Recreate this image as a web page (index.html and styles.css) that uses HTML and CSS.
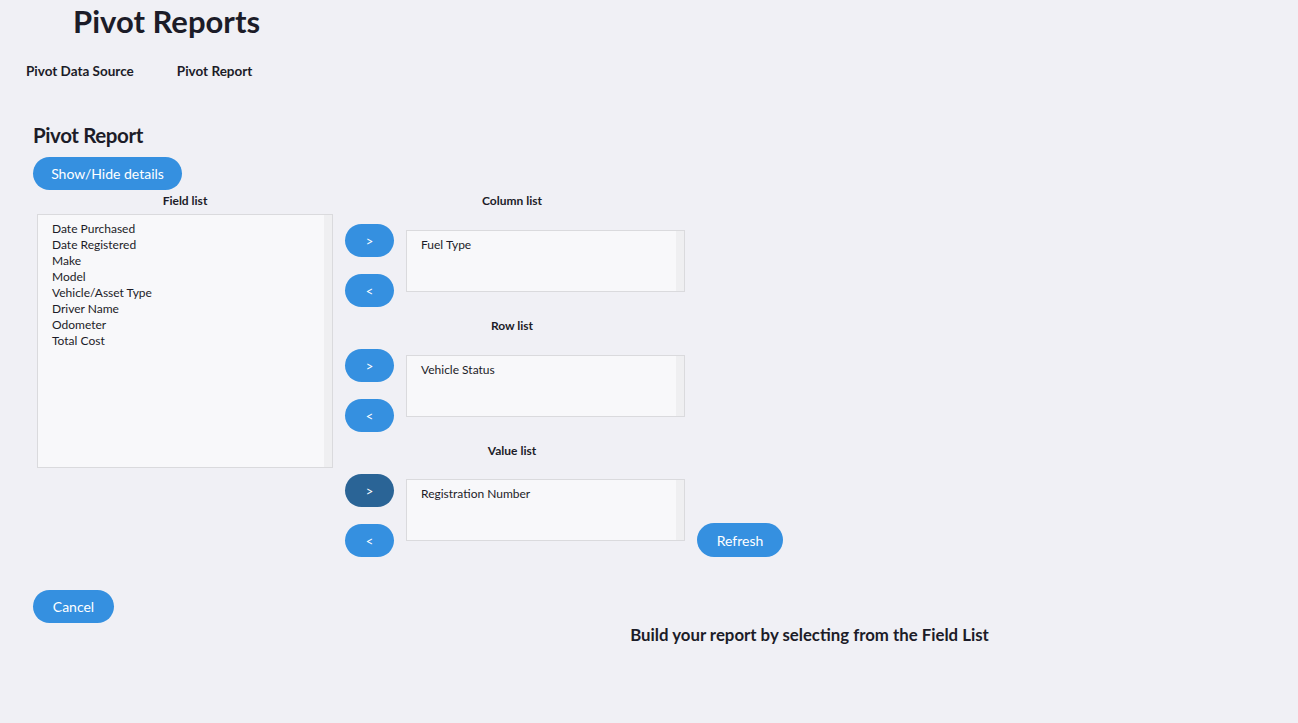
FILE: index.html
```html
<!DOCTYPE html>
<html>
<head>
    <title>Pivot Reports</title>
    <link rel="stylesheet" href="styles.css">
</head>
<body>
    <h1 class="page-title">Pivot Reports</h1>
    <nav class="tabs">
        <a class="tab">Pivot Data Source</a>
        <a class="tab">Pivot Report</a>
    </nav>

    <section class="report">
        <h2 class="report-title">Pivot Report</h2>
        <button class="btn btn-details">Show/Hide details</button>

        <div class="builder">
            <div class="field-col">
                <div class="list-label">Field list</div>
                <div class="listbox field-box">
                    <ul class="items">
                        <li>Date Purchased</li>
                        <li>Date Registered</li>
                        <li>Make</li>
                        <li>Model</li>
                        <li>Vehicle/Asset Type</li>
                        <li>Driver Name</li>
                        <li>Odometer</li>
                        <li>Total Cost</li>
                    </ul>
                    <div class="track"></div>
                </div>
            </div>

            <div class="targets">
                <div class="group">
                    <div class="list-label group-label">Column list</div>
                    <div class="group-row">
                        <div class="arrows">
                            <button class="btn btn-arrow">&gt;</button>
                            <button class="btn btn-arrow">&lt;</button>
                        </div>
                        <div class="listbox small-box">
                            <ul class="items"><li>Fuel Type</li></ul>
                            <div class="track"></div>
                        </div>
                    </div>
                </div>

                <div class="group">
                    <div class="list-label group-label">Row list</div>
                    <div class="group-row">
                        <div class="arrows">
                            <button class="btn btn-arrow">&gt;</button>
                            <button class="btn btn-arrow">&lt;</button>
                        </div>
                        <div class="listbox small-box">
                            <ul class="items"><li>Vehicle Status</li></ul>
                            <div class="track"></div>
                        </div>
                    </div>
                </div>

                <div class="group">
                    <div class="list-label group-label">Value list</div>
                    <div class="group-row">
                        <div class="arrows">
                            <button class="btn btn-arrow active">&gt;</button>
                            <button class="btn btn-arrow">&lt;</button>
                        </div>
                        <div class="listbox small-box value-box">
                            <ul class="items"><li>Registration Number</li></ul>
                            <div class="track"></div>
                        </div>
                        <button class="btn btn-refresh">Refresh</button>
                    </div>
                </div>
            </div>
        </div>

        <button class="btn btn-cancel">Cancel</button>
    </section>

    <p class="hint">Build your report by selecting from the Field List</p>
</body>
</html>
```

FILE: styles.css
```css
body { margin: 0; background: #f0f0f5; color: #1c1c28; font-family: "Source Sans Pro", Lato, "Liberation Sans", sans-serif; }
.page-title { margin: 0; padding: 4px 0 0 73px; font-size: 31px; font-weight: 700; line-height: 34px; }
.tabs { display: flex; gap: 43px; padding: 25px 0 0 26px; }
.tab { font-size: 13.5px; font-weight: 700; line-height: 16px; }
.report { padding: 44px 0 0 33px; }
.report-title { margin: 0; font-size: 20.5px; font-weight: 700; line-height: 24px; letter-spacing: -0.4px; }
.btn { border: none; background: #3590e0; color: #fff; font-family: inherit; cursor: pointer; border-radius: 17px; height: 33px; padding: 0; }
.btn-details { margin-top: 10px; width: 149px; font-size: 14px; }
.builder { display: flex; margin-top: 3px; }
.field-col { width: 296px; margin-left: 4px; }
.list-label { font-size: 12px; font-weight: 700; text-align: center; line-height: 16px; }
.group-label { width: 334px; }
.listbox { display: flex; background: #f8f8fa; border: 1px solid #dadadd; box-sizing: border-box; }
.field-box { height: 254px; margin-top: 5px; }
.items { flex: 1; margin: 0; padding: 6px 0 0 14px; list-style: none; font-size: 12px; line-height: 16px; }
.track { width: 8px; background: #efeff1; }
.targets { margin-left: 12px; display: flex; flex-direction: column; gap: 11px; }
.group-row { display: flex; align-items: flex-start; margin-top: 15px; }
.arrows { display: flex; flex-direction: column; gap: 17px; }
.btn-arrow { width: 49px; font-size: 13px; }
.btn-arrow.active { background: #2a6496; }
.small-box { width: 279px; height: 62px; margin: 6px 0 0 12px; }
.value-box { margin-top: 5px; }
.btn-refresh { align-self: flex-end; width: 86px; height: 34px; margin-left: 12px; font-size: 14px; }
.btn-cancel { margin-top: 33px; width: 81px; font-size: 14px; }
.hint { margin: 2px 0 0 321px; text-align: center; font-size: 16.8px; font-weight: 700; line-height: 20px; }
```
